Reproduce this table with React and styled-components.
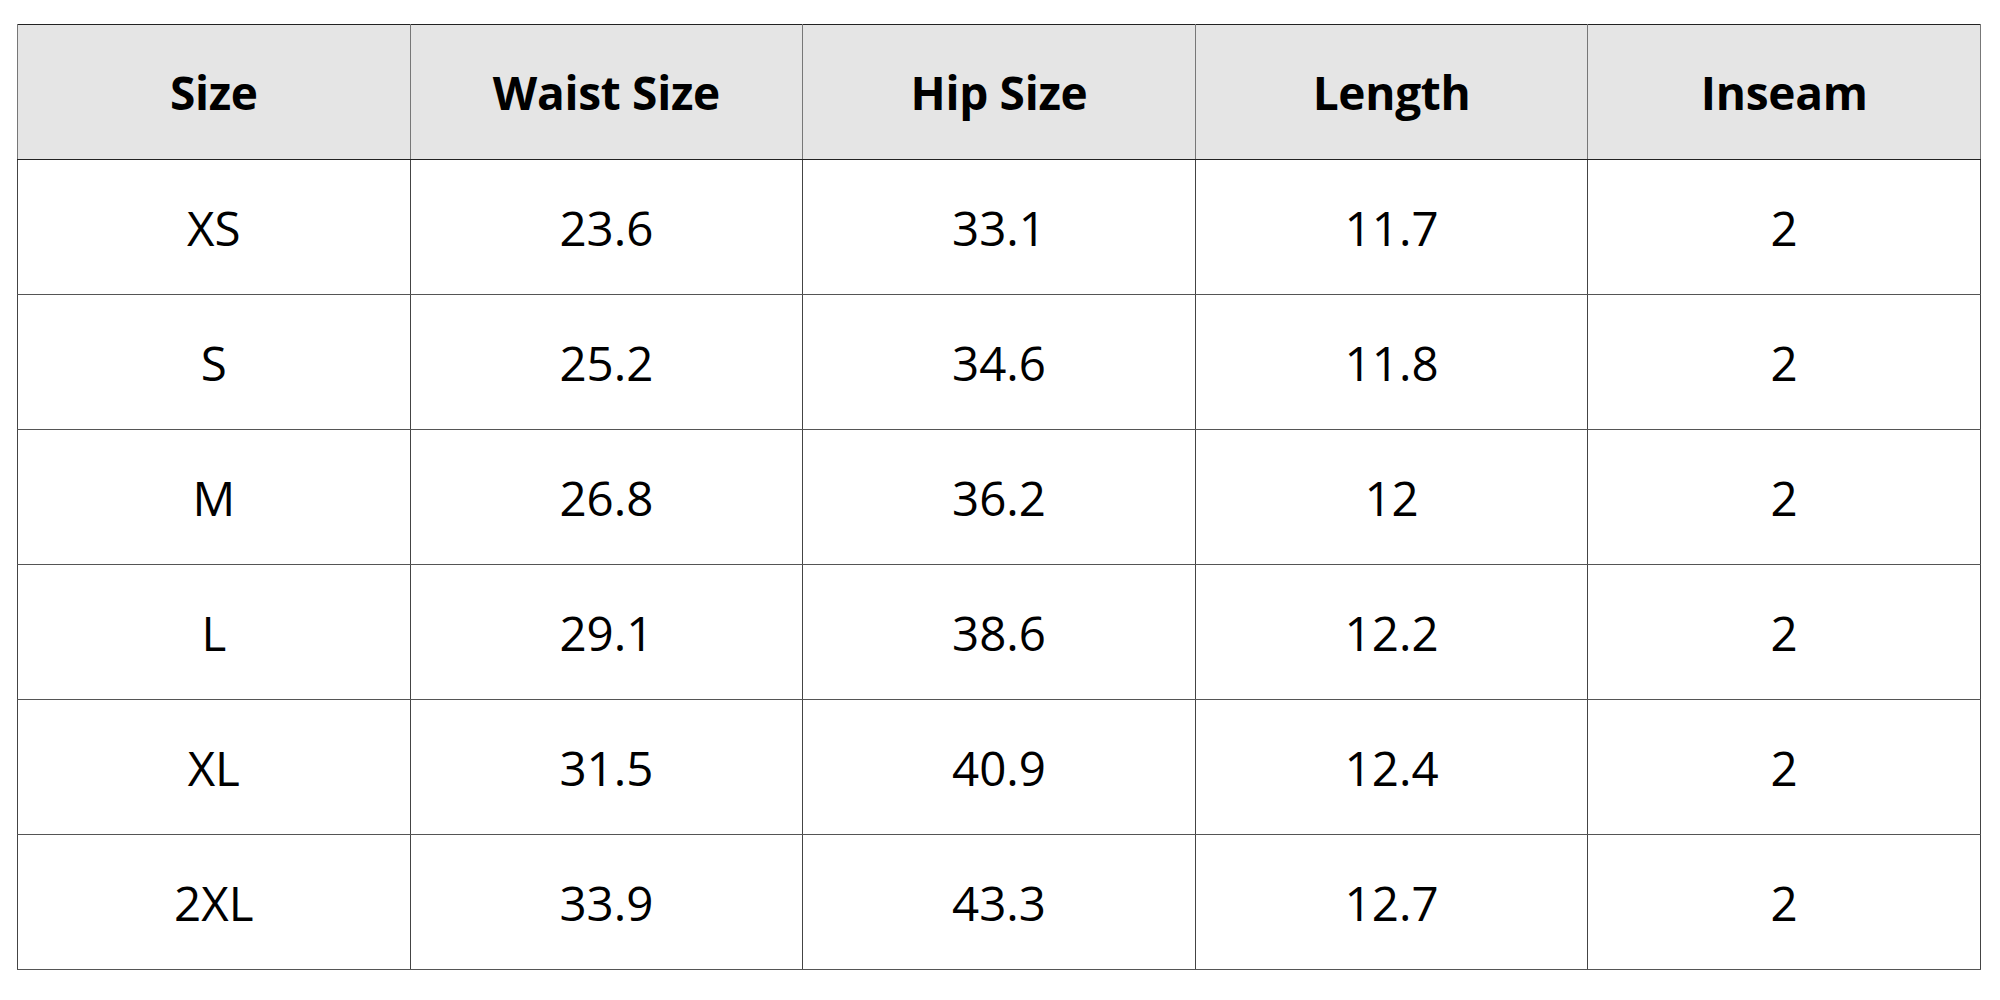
import React from "react";
import styled, { createGlobalStyle } from "styled-components";

const Global = createGlobalStyle`
  html, body { margin: 0; padding: 0; background: #ffffff; }
  body { font-family: "Open Sans", Lato, sans-serif; color: #000; }
`;

const Page = styled.div`
  width: 2000px;
  height: 1000px;
  box-sizing: border-box;
  padding: 24px 19px 0 17px;
  background: #fff;
`;

const Table = styled.table`
  width: 1964px;
  table-layout: fixed;
  border-collapse: collapse;
  border: 1.5px solid #666;
  border-top: 1.5px solid #222;
`;

const HeadCell = styled.th`
  height: 134px;
  padding: 0;
  background: #e5e5e5;
  font-family: "Open Sans", sans-serif;
  font-weight: 700;
  font-size: 46px;
  letter-spacing: -0.3px;
  text-align: center;
  vertical-align: middle;
  border-left: 1.5px solid #777;
  border-right: 1.5px solid #777;
  border-bottom: 1.5px solid #222;
`;

const Cell = styled.td`
  height: 134px;
  padding: 0;
  font-family: "Open Sans", sans-serif;
  font-weight: 400;
  font-size: 47.5px;
  text-align: center;
  vertical-align: middle;
  border-left: 1.5px solid #444;
  border-right: 1.5px solid #444;
  border-bottom: 1.5px solid #555;
`;

const headers = ["Size", "Waist Size", "Hip Size", "Length", "Inseam"];
const rows = [
  ["XS", "23.6", "33.1", "11.7", "2"],
  ["S", "25.2", "34.6", "11.8", "2"],
  ["M", "26.8", "36.2", "12", "2"],
  ["L", "29.1", "38.6", "12.2", "2"],
  ["XL", "31.5", "40.9", "12.4", "2"],
  ["2XL", "33.9", "43.3", "12.7", "2"],
];

export default function App() {
  return (
    <Page>
      <Global />
      <Table>
        <thead>
          <tr>
            {headers.map((h) => (
              <HeadCell key={h}>{h}</HeadCell>
            ))}
          </tr>
        </thead>
        <tbody>
          {rows.map((r) => (
            <tr key={r[0]}>
              {r.map((v, i) => (
                <Cell key={i}>{v}</Cell>
              ))}
            </tr>
          ))}
        </tbody>
      </Table>
    </Page>
  );
}
